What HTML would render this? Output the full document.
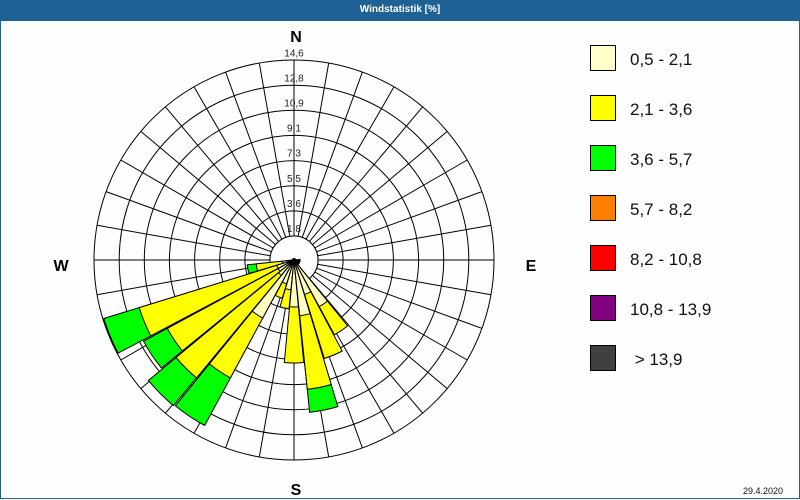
<!DOCTYPE html>
<html><head><meta charset="utf-8"><style>
html,body{margin:0;padding:0;width:800px;height:500px;overflow:hidden;background:#fdfefd;font-family:"Liberation Sans","DejaVu Sans",sans-serif}
#t{position:absolute;left:0;top:0;width:800px;height:21px;background:#1e6195;color:#fff;font:bold 10px "Liberation Sans",sans-serif;text-align:center;line-height:20px}
#f{position:absolute;left:0;top:21px;width:798px;height:477px;border:1px solid #1e6195;border-top:none}
svg{position:absolute;left:0;top:0}
</style></head><body>
<div id="t">Windstatistik [%]</div><div id="f"></div>
<svg id="s" width="800" height="500" xmlns="http://www.w3.org/2000/svg"></svg>
<script>
var s=document.getElementById('s'),cx=294,cy=260,h='';
function P(b,r){var a=(b-90)*Math.PI/180;return [cx+r*Math.cos(a),cy+r*Math.sin(a)];}
function wedge(b,r,c){var w=5.4,p1=P(b-w,r),p2=P(b+w,r);h+='<path d="M'+cx+' '+cy+'L'+p1[0].toFixed(1)+' '+p1[1].toFixed(1)+'A'+r+' '+r+' 0 0 1 '+p2[0].toFixed(1)+' '+p2[1].toFixed(1)+'Z" fill="'+c+'" stroke="#000" stroke-width="1"/>';}
for(var k=0;k<8;k++){h+='<circle cx="'+cx+'" cy="'+cy+'" r="'+(24+k*25.14).toFixed(1)+'" fill="none" stroke="#000" stroke-width="1"/>';}
for(var b=0;b<360;b+=10){var a=P(b,24),o=P(b,200);if(b%90==0)a=P(b,b==0?200:24);h+='<line x1="'+a[0].toFixed(1)+'" y1="'+a[1].toFixed(1)+'" x2="'+o[0].toFixed(1)+'" y2="'+o[1].toFixed(1)+'" stroke="#000"/>';}
h+='<line x1="94" y1="260" x2="494" y2="260" stroke="#000"/><line x1="294" y1="60" x2="294" y2="460" stroke="#000"/>';
h+='<circle cx="'+cx+'" cy="'+cy+'" r="24" fill="#fdfefd" stroke="#000"/>';
var labs=['1,8','3,6','5,5','7,3','9,1','10,9','12,8','14,6'];
for(var k=0;k<8;k++){h+='<text x="294" y="'+(232-k*25.1).toFixed(1)+'" font-size="10" text-anchor="middle" font-family="Liberation Sans,sans-serif" fill="#222">'+labs[k]+'</text>';}
var d=[[258.75,12,38,47],[247.5,18,162,199],[236.25,18,144,171],[225,20,153,189],[213.75,66,134,188],[202.5,25,40,0],[191.25,30,49,0],[180,47,103,0],[168.75,56,130,153],[157.5,36,103,0],[146.25,53,85,0]];
for(var b=90;b<270;b+=11.25){wedge(b,6,'#ffffc0');}
d.forEach(function(e){if(e[3])wedge(e[0],e[3],'#00ff00');wedge(e[0],e[2],'#ffff00');wedge(e[0],e[1],'#ffffc0');});
h+='<circle cx="'+cx+'" cy="'+cy+'" r="2" fill="#000"/>';
h+='<g font-weight="bold" font-size="16" text-anchor="middle" font-family="Liberation Sans,sans-serif"><text x="296" y="42">N</text><text x="61" y="271">W</text><text x="531" y="271">E</text><text x="296" y="495">S</text></g>';
var lg=[['#ffffc8','0,5 - 2,1'],['#ffff00','2,1 - 3,6'],['#00ff00','3,6 - 5,7'],['#ff8000','5,7 - 8,2'],['#ff0000','8,2 - 10,8'],['#800080','10,8 - 13,9'],['#404040','&#160;&gt; 13,9']];
lg.forEach(function(e,i){var y=45+i*50;h+='<rect x="590.5" y="'+(y+.5)+'" width="25" height="25" fill="'+e[0]+'" stroke="#000"/><text x="630" y="'+(y+20)+'" font-size="17" font-family="Liberation Sans,sans-serif" fill="#111">'+e[1]+'</text>';});
h+='<text x="763" y="494" font-size="9" text-anchor="middle" font-family="Liberation Sans,sans-serif" fill="#111">29.4.2020</text>';
s.innerHTML=h;
</script>
</body></html>
